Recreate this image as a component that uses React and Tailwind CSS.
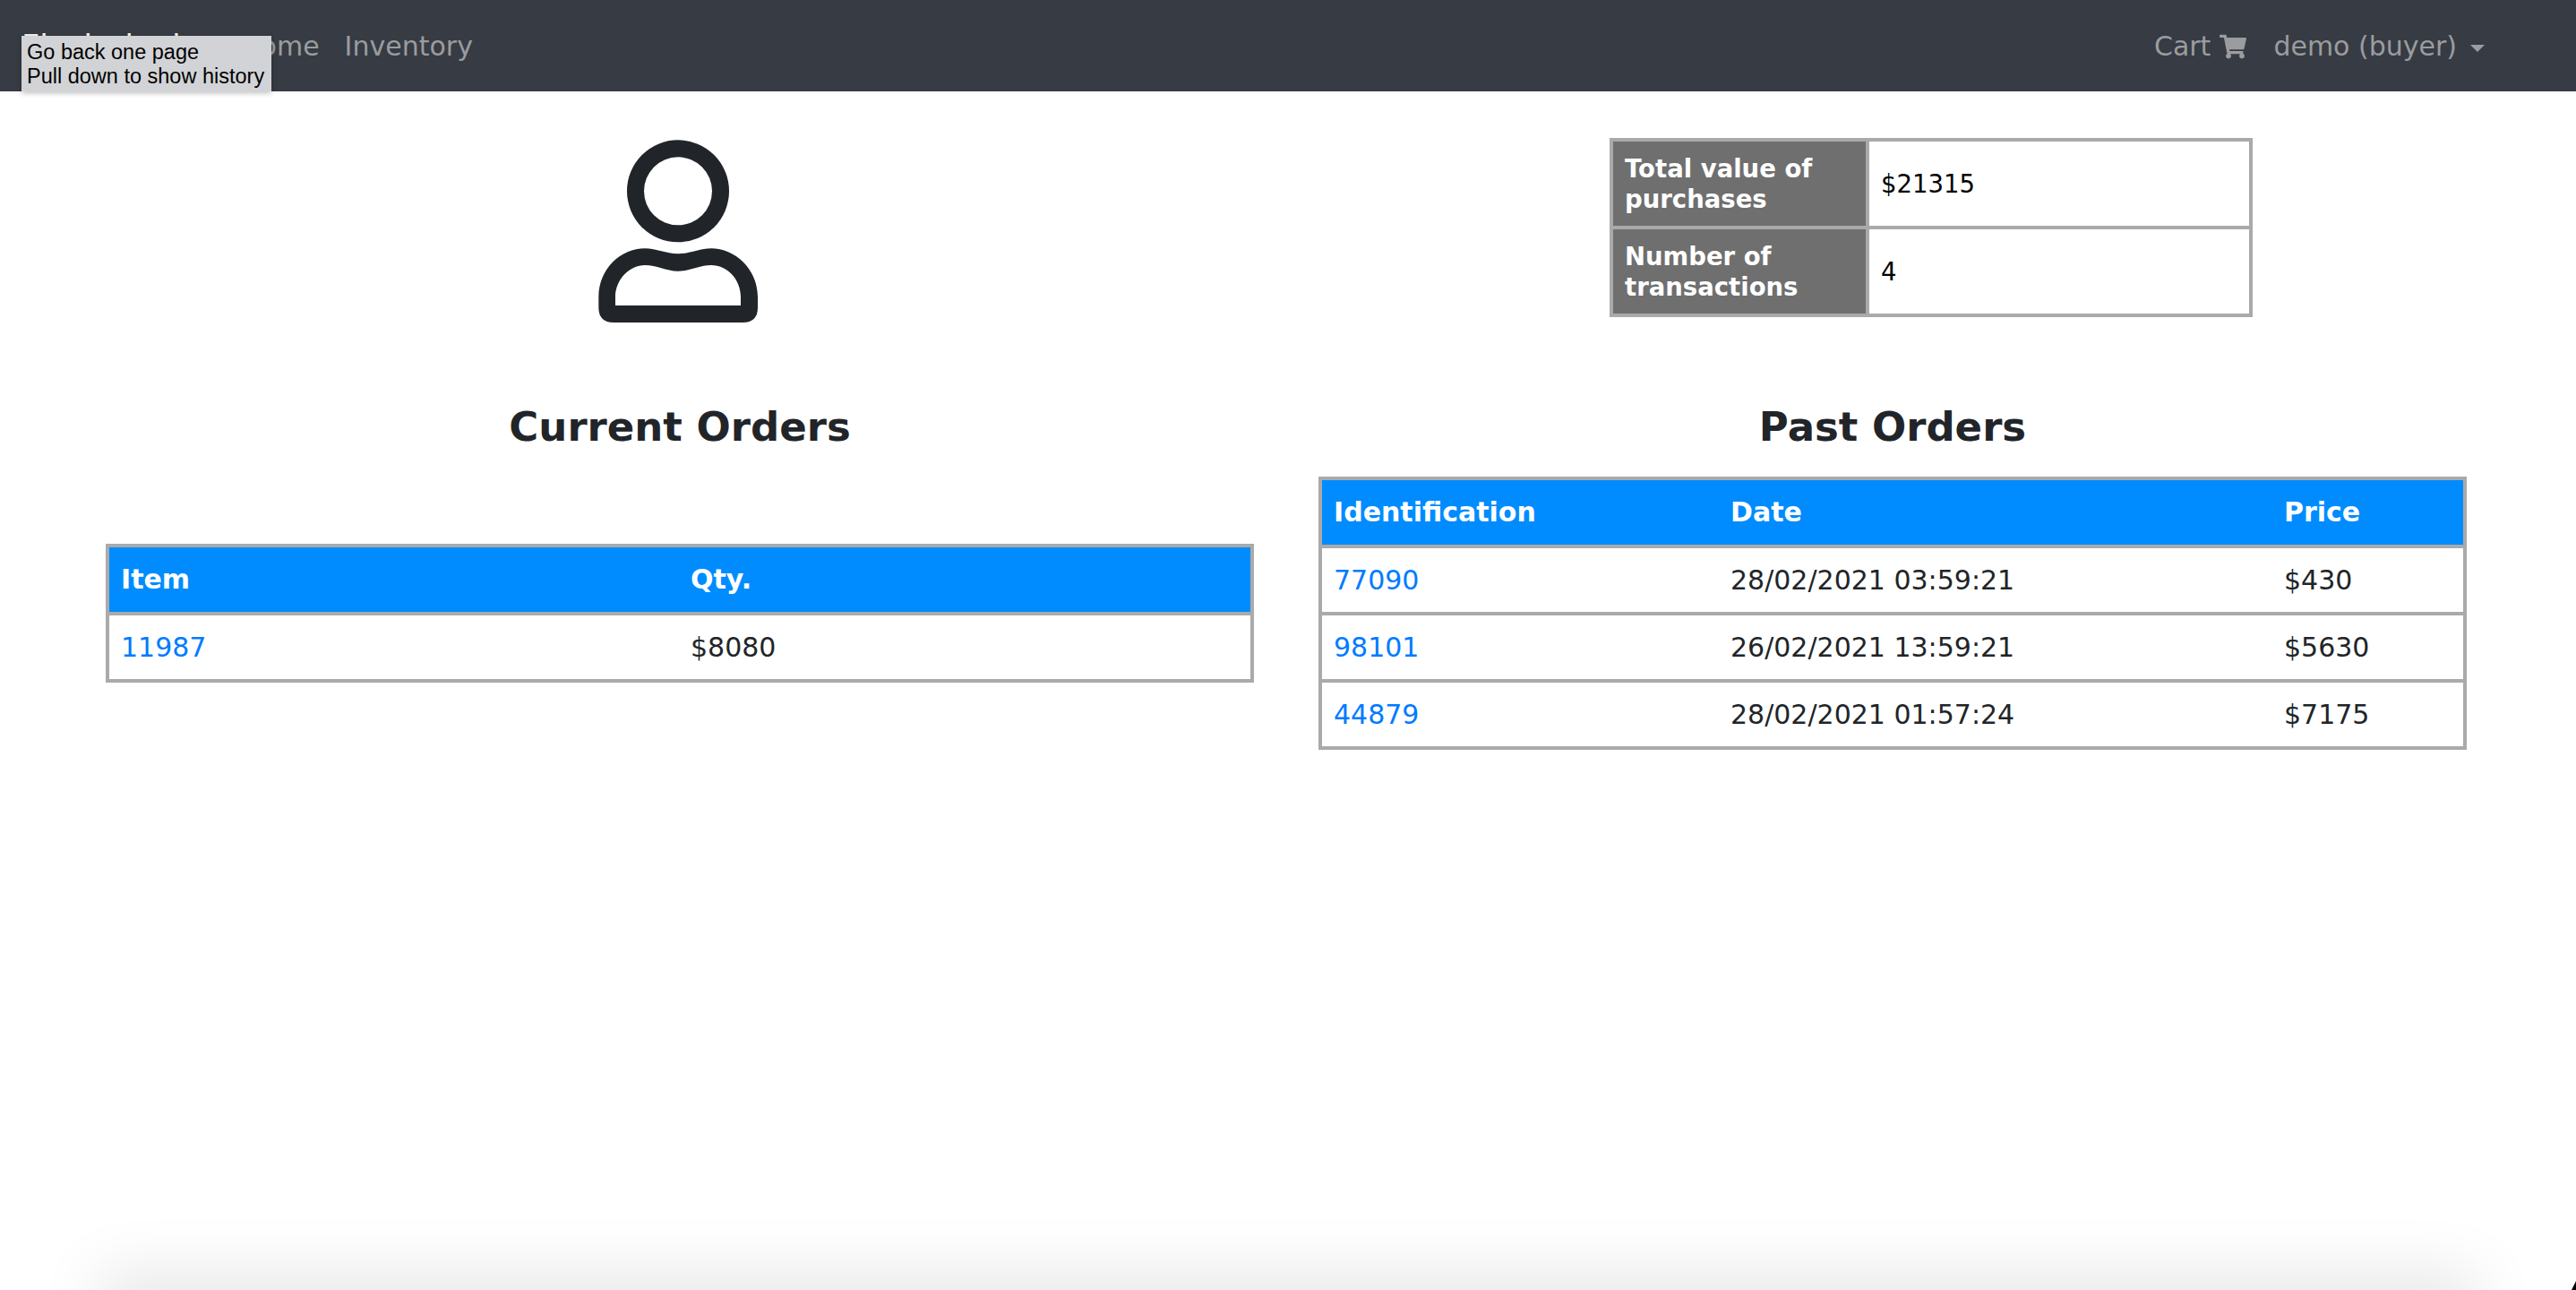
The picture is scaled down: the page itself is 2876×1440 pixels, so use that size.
import { FaShoppingCart } from 'react-icons/fa';

const FONT = "font-['DejaVu_Sans',sans-serif]";

const pastOrders = [
  { id: '77090', date: '28/02/2021 03:59:21', price: '$430' },
  { id: '98101', date: '26/02/2021 13:59:21', price: '$5630' },
  { id: '44879', date: '28/02/2021 01:57:24', price: '$7175' },
];

const table = 'w-full table-fixed border-collapse border-[4px] border-[#aaaaaa]';
const th = 'border-y-[4px] border-[#aaaaaa] bg-[#008cff] px-[13px] h-[76px] text-left font-bold text-white';
const td = 'border-y-[4px] border-[#aaaaaa] px-[13px] h-[75px] text-[#212529]';
const statTh = 'border-[4px] border-[#aaaaaa] bg-[#6f6f6f] px-[13px] h-[98px] text-left font-bold text-white';
const statTd = 'border-[4px] border-[#aaaaaa] px-[13px] text-black';
const link = 'text-[#007bff]';

const UserIcon = () => (
  <svg viewBox="0 0 780 750" className="w-[260px] h-[250px]" fill="#212529">
    <path
      fillRule="evenodd"
      d="M411 79a171 171 0 1 0 0 342a171 171 0 1 0 0-342ZM411 136a114 114 0 1 1 0 228a114 114 0 1 1 0-228Z"
    />
    <path
      fillRule="evenodd"
      d="M195 690Q145 690 145 640V605C145 510 220 442 300 442C340 442 370 460 411 460C452 460 482 442 522 442C600 442 678 510 678 605V640Q678 690 628 690ZM201 633H621V605C621 545 575 498 522 498C482 498 452 518 411 518C370 518 340 498 300 498C250 498 201 545 201 605Z"
    />
  </svg>
);

const Navbar = () => (
  <nav className="flex h-[102px] items-center justify-between bg-[#373b43] pl-[24px] pr-[102px] pt-[2px] text-[30px] text-[#9a9c9f]">
    <div className="flex items-center gap-[28px]">
      <span className="w-[216px] whitespace-nowrap text-[35px] text-[#f4f4f4]">Flash deals</span>
      <a>Home</a>
      <a>Inventory</a>
    </div>
    <div className="flex items-center gap-[30px]">
      <a className="flex items-center gap-[10px]">
        Cart <FaShoppingCart className="text-[30px]" />
      </a>
      <a className="flex items-center gap-[15px]">
        demo (buyer)
        <span className="mt-[3px] border-x-[8px] border-t-[8px] border-x-transparent border-t-[#9a9c9f]" />
      </a>
    </div>
  </nav>
);

export default function App() {
  return (
    <div className={`relative h-[1440px] overflow-hidden bg-white text-[30px] leading-[34px] ${FONT}`}>
      <Navbar />

      {/* back button tooltip */}
      <div className="absolute left-[24px] top-[40px] h-[62px] w-[279px] whitespace-nowrap bg-[#d2d3d6] px-[6px] pt-[5px] font-['Liberation_Sans',sans-serif] text-[23.5px] leading-[27px] text-black shadow-[0_2px_6px_rgba(0,0,0,0.25)]">
        Go back one page
        <br />
        Pull down to show history
      </div>

      <main className="grid grid-cols-[1282px_1282px] gap-x-[72px] pl-[118px]">
        <div className="flex flex-col items-center">
          <div className="mt-[28px] mr-[18px] h-[250px]">
            <UserIcon />
          </div>
          <h2 className="mt-[69px] text-[45px] leading-[56px] font-bold text-[#212529]">Current Orders</h2>
          <table className={`${table} mt-[102px]`}>
            <thead>
              <tr>
                <th className={`${th} w-[638px]`}>Item</th>
                <th className={th}>Qty.</th>
              </tr>
            </thead>
            <tbody>
              <tr>
                <td className={td}>
                  <a className={link}>11987</a>
                </td>
                <td className={td}>$8080</td>
              </tr>
            </tbody>
          </table>
        </div>

        <div className="flex flex-col items-center">
          <div className="mt-[52px] ml-[325px] h-[226px] self-start text-[27.5px]">
            <table className="w-[718px] table-fixed border-collapse">
              <tbody>
                <tr>
                  <th className={`${statTh} w-[286px]`}>Total value of purchases</th>
                  <td className={statTd}>$21315</td>
                </tr>
                <tr>
                  <th className={statTh}>Number of transactions</th>
                  <td className={statTd}>4</td>
                </tr>
              </tbody>
            </table>
          </div>
          <h2 className="mt-[69px] text-[45px] leading-[56px] font-bold text-[#212529]">Past Orders</h2>
          <table className={`${table} mt-[27px]`}>
            <thead>
              <tr>
                <th className={`${th} w-[445px]`}>Identification</th>
                <th className={`${th} w-[618px]`}>Date</th>
                <th className={th}>Price</th>
              </tr>
            </thead>
            <tbody>
              {pastOrders.map((order) => (
                <tr key={order.id}>
                  <td className={td}>
                    <a className={link}>{order.id}</a>
                  </td>
                  <td className={td}>{order.date}</td>
                  <td className={td}>{order.price}</td>
                </tr>
              ))}
            </tbody>
          </table>
        </div>
      </main>

      {/* window shadow along the bottom edge */}
      <div className="absolute inset-x-[130px] top-[1442px] h-[40px] shadow-[0_0_70px_20px_rgba(0,0,0,0.1)]" />
      <div className="absolute bottom-0 right-0 h-[10px] w-[5px] bg-black [clip-path:polygon(100%_0,100%_100%,0_100%)]" />
    </div>
  );
}
